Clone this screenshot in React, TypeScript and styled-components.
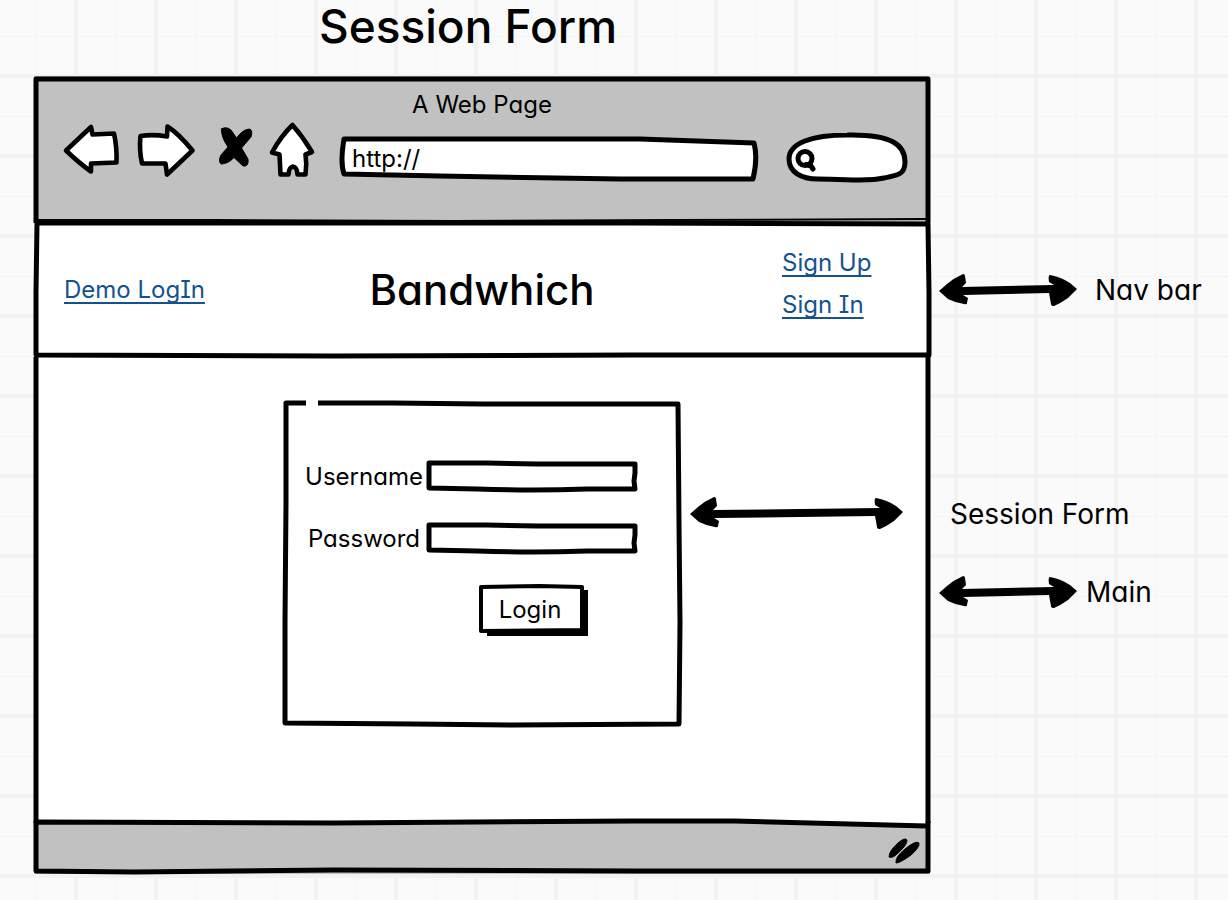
import React from "react";
import styled, { createGlobalStyle } from "styled-components";

const ink = "#000000";
const chromeGrey = "#c1c1c1";
const linkBlue = "#14528f";

const GlobalStyle = createGlobalStyle`
  *, *::before, *::after { box-sizing: border-box; }
  body {
    margin: 0;
    background-color: #fafafa;
    background-image:
      linear-gradient(90deg, #f2f2f2 4px, transparent 4px),
      linear-gradient(#f2f2f2 4px, transparent 4px),
      linear-gradient(90deg, #f4f4f4 1px, transparent 1px),
      linear-gradient(#f4f4f4 1px, transparent 1px);
    background-size: 80px 80px;
    background-position: 74px 0, 0 74px, 36px 0, 0 36px;
    color: ${ink};
    font-family: Inter, "Open Sans", sans-serif;
    font-feature-settings: "cv11", "cv08";
    font-size: 24px;
    line-height: 32px;
  }
`;

const Page = styled.div`
  min-height: 100vh;
  padding-left: 34px;
`;

const Board = styled.div`
  display: grid;
  grid-template-columns: minmax(0, 1fr) 298px;
`;

const BoardTitle = styled.h1`
  margin: 0;
  padding: 0 28px 24px 0;
  font-size: 46px;
  line-height: 52px;
  font-weight: 500;
  text-align: center;
`;

const Panel = styled.div<{ $fill: string }>`
  position: relative;
  grid-column: 1;
  background: ${(p) => p.$fill};
`;

const Outline = styled.svg`
  position: absolute;
  inset: 0;
  width: 100%;
  height: 100%;
  overflow: visible;
  pointer-events: none;
`;

const Chrome = styled(Panel)`
  padding: 13px 23px 40px 30px;
`;

const WindowTitle = styled.div`
  padding: 0 7px 0 0;
  text-align: center;
`;

const Toolbar = styled.div`
  display: flex;
  align-items: flex-start;
  gap: 26px;
`;

const IconRow = styled.div`
  display: flex;
  gap: 16px;
`;

const IconButton = styled.button`
  display: block;
  padding: 0;
  border: 0;
  background: none;
  cursor: pointer;

  svg { display: block; overflow: visible; }
`;

const SketchField = styled.div<{ $width?: string }>`
  position: relative;
  display: flex;
  flex: ${(p) => (p.$width ? "none" : "1")};
  width: ${(p) => p.$width ?? "auto"};
  height: 48px;
  margin-top: 14px;
`;

const TextInput = styled.input`
  position: relative;
  width: 100%;
  min-width: 0;
  padding: 0 12px;
  border: 0;
  outline: 0;
  background: transparent;
  color: inherit;
  font: inherit;
  font-feature-settings: inherit;
`;

const SearchInput = styled(TextInput)`
  padding-left: 32px;
`;

const NavBar = styled(Panel)`
  z-index: 1;
  display: grid;
  grid-template-columns: 1fr auto 1fr;
  align-items: center;
  min-height: 134px;
  padding: 0 30px;
`;

const NavLink = styled.a`
  color: ${linkBlue};
  text-decoration: underline;
  text-decoration-thickness: 2px;
  text-decoration-skip-ink: none;
  text-underline-offset: 4px;
`;

const Brand = styled.div`
  font-size: 42px;
  line-height: 52px;
  font-weight: 500;
`;

const AccountLinks = styled.nav`
  display: flex;
  flex-direction: column;
  align-items: flex-start;
  justify-self: end;
  width: 118px;
  gap: 10px;
  padding-bottom: 12px;
`;

const MainArea = styled(Panel)`
  display: grid;
  grid-template-columns: 1fr 398px 1fr;
  align-items: start;
  min-height: 466px;
  padding: 46px 0 94px;
`;

const LoginForm = styled.form`
  position: relative;
  grid-column: 2;
  display: flex;
  flex-direction: column;
  gap: 30px;
  min-height: 326px;
  padding: 58px 44px 0 18px;
`;

const FieldRow = styled.div`
  display: grid;
  grid-template-columns: 126px minmax(0, 1fr);
  align-items: center;
`;

const FieldLabel = styled.label`
  text-align: center;
`;

const FieldBox = styled.div`
  position: relative;
  display: flex;
  height: 32px;
`;

const SubmitButton = styled.button`
  position: relative;
  align-self: flex-end;
  width: 110px;
  height: 52px;
  margin-right: 48px;
  padding: 0 8px 2px 0;
  border: 0;
  background: none;
  color: inherit;
  font: inherit;
  font-feature-settings: inherit;
  cursor: pointer;

  span { position: relative; }
`;

const FormArrow = styled.div`
  padding: 94px 0 0 9px;
`;

const StatusBar = styled(Panel)`
  display: flex;
  align-items: center;
  justify-content: flex-end;
  height: 51px;
  padding: 4px 10px 0 0;
`;

const ResizeGrip = styled.svg`
  position: relative;
  display: block;
`;

const Notes = styled.div<{ $top: number }>`
  grid-column: 2;
  display: flex;
  flex-direction: column;
  gap: 40px;
  padding-top: ${(p) => p.$top}px;
`;

const Note = styled.div<{ $indent: number; $gap: number }>`
  display: flex;
  align-items: center;
  gap: ${(p) => p.$gap}px;
  padding-left: ${(p) => p.$indent}px;
  font-size: 28px;
  line-height: 38px;
  white-space: nowrap;
`;

const ArrowSvg = styled.svg`
  display: block;
  flex: none;
`;

type SketchProps = {
  box: string;
  d: string;
  stroke?: number;
  fill?: string;
  under?: React.ReactNode;
  over?: React.ReactNode;
};

function Sketch({ box, d, stroke = 5, fill = "none", under, over }: SketchProps) {
  return (
    <Outline viewBox={box} preserveAspectRatio="none" aria-hidden="true">
      {under}
      <path
        d={d}
        fill={fill}
        stroke={stroke ? ink : "none"}
        strokeWidth={stroke}
        strokeLinejoin="round"
        strokeLinecap="butt"
        vectorEffect="non-scaling-stroke"
      />
      {over}
    </Outline>
  );
}

function DoubleArrow({ width: w }: { width: number }) {
  const d =
    `M0 17 L8 10 Q15 4 24 0 Q26 0 26 2 L27 9 L23 13 L${w - 23} 11 L${w - 28} 8 ` +
    `Q${w - 29} 1 ${w - 27} 1 Q${w - 16} 3 ${w - 7} 9 L${w} 15 L${w - 9} 24 Q${w - 16} 29 ${w - 23} 32 ` +
    `Q${w - 26} 32 ${w - 26} 30 L${w - 28} 19 L24 21 L29 24 L28 29 Q28 31 25 30 Q17 29 9 25 Z`;
  return (
    <ArrowSvg width={w} height={32} aria-hidden="true">
      <path d={d} fill={ink} />
    </ArrowSvg>
  );
}

function ToolIcon({ label, x, width, children }: { label: string; x: number; width: number; children: React.ReactNode }) {
  return (
    <IconButton type="button" aria-label={label}>
      <svg
        width={width}
        height={60}
        viewBox={`${x} 121 ${width} 60`}
        fill="#fff"
        stroke={ink}
        strokeWidth="4.6"
        strokeLinejoin="round"
        strokeLinecap="round"
      >
        {children}
      </svg>
    </IconButton>
  );
}

function Field({ id, label, type }: { id: string; label: string; type: string }) {
  return (
    <FieldRow>
      <FieldLabel htmlFor={id}>{label}</FieldLabel>
      <FieldBox>
        <Sketch
          box="0 0 210 32"
          d="M2 2 L60 2 L110 3 L160 3 L208 3 L208 12 L207 20 L208 28 L160 28 Q105 30 50 28 L2 27 L2 18 L2 10 Z"
          fill="#fff"
        />
        <TextInput id={id} type={type} />
      </FieldBox>
    </FieldRow>
  );
}

export default function App() {
  return (
    <Page>
      <GlobalStyle />
      <Board>
        <BoardTitle>Session Form</BoardTitle>

        <Chrome $fill={chromeGrey}>
          <Sketch box="0 0 896 147" d="M2 147 L2 60 L2 3 L300 3 L894 3 L894 60 L894 147" />
          <Sketch box="0 0 896 147" d="M3 144 L180 144 L420 145 L640 144 L892 143" stroke={2} />
          <WindowTitle>A Web Page</WindowTitle>
          <Toolbar>
            <IconRow>
              <ToolIcon label="Back" x={64} width={56}>
                <path d="M66 150.5 L91 127 L92.5 134.5 L114 133.5 Q117 147 116.5 162.5 L91 163.5 L91 171.5 Q79 163 66 150.5 Z" />
              </ToolIcon>
              <ToolIcon label="Forward" x={136} width={60}>
                <path d="M140.5 136 Q153 134 167 136.5 L167.5 126.5 Q179 134 192.5 150.5 L167 174.5 L165.5 163.5 L142 163.5 Q139 150 140.5 136 Z" />
              </ToolIcon>
              <ToolIcon label="Stop" x={212} width={42}>
                <path
                  d="M221.500 129 Q226 126 231 130 L236.500 138 Q243 129 250 129 Q253 131 251 137 L241.500 148 L248 159 Q249 167 243 166 L234 157.500 Q228 164 221 164 Q218 161 221 155 L228 147 Q221 137 221.500 129 Z"
                  fill={ink}
                  stroke={ink}
                  strokeWidth="1"
                />
              </ToolIcon>
              <ToolIcon label="Home" x={270} width={44}>
                <path d="M292.5 125 Q303 137 312 152 L305.5 154.5 Q307 164 305.5 174.5 L297.5 174.5 Q297 167 293 166.5 Q289 167 288.5 174.5 L280.5 174.5 L279.5 154.5 L272 152.5 Q281 136 292.5 125 Z" />
              </ToolIcon>
            </IconRow>
            <SketchField>
              <Sketch
                box="340 135 419 48"
                d="M344 139 L640 139 L754 143 Q758 158 753 179 L620 179 L440 176 L344 174 Q340 162 344 139 Z"
                fill="#fff"
              />
              <TextInput aria-label="Address" defaultValue="http://" />
            </SketchField>
            <SketchField $width="122px">
              <Sketch
                box="785 135 122 48"
                d="M789 159 C789 143 812 135 847 135 C892 134 905 145 905 162 C905 174 899 175 884 178 C867 182 850 179 818 179 C801 179 789 172 789 159 Z"
                fill="#fff"
                over={
                  <g fill="none" stroke={ink} strokeWidth="5" strokeLinecap="round">
                    <circle cx="805" cy="158.5" r="7" />
                    <path d="M806 164.5 L811 166 L813 169" />
                  </g>
                }
              />
              <SearchInput type="search" aria-label="Search" />
            </SketchField>
          </Toolbar>
        </Chrome>

        <NavBar $fill="#ffffff">
          <Sketch
            box="0 0 896 134"
            d="M3 0 L120 0 L300 0 L600 0 L894 1 L895 70 L895 132 L600 132 L300 133 L2 132 L2 70 Z"
          />
          <div>
            <NavLink href="#demo">Demo LogIn</NavLink>
          </div>
          <Brand>Bandwhich</Brand>
          <AccountLinks aria-label="Account">
            <NavLink href="#sign-up">Sign Up</NavLink>
            <NavLink href="#sign-in">Sign In</NavLink>
          </AccountLinks>
        </NavBar>
        <Notes $top={48}>
          <Note $indent={9} $gap={18}>
            <DoubleArrow width={138} />
            Nav bar
          </Note>
        </Notes>

        <MainArea $fill="#ffffff">
          <Sketch box="0 0 896 466" d="M2 0 L2 466 M894 0 L894 466" />
          <LoginForm onSubmit={(e) => e.preventDefault()}>
            <Sketch
              box="0 0 398 326"
              d="M35 0 L110 0 L200 1 L395 1 L396 120 L397 220 L396 321 L230 322 L130 321 L2 320 L2 220 L3 100 L3 0 L23 0"
            />
            <Field id="username" label="Username" type="text" />
            <Field id="password" label="Password" type="password" />
            <SubmitButton type="submit">
              <Sketch
                box="0 0 110 52"
                d="M2 2 L60 1 L103 2 L103 45 L2 46 Z"
                fill="#fff"
                stroke={4}
                under={<path d="M8 5 H109 V51 H8 Z" fill={ink} />}
              />
              <span>Login</span>
            </SubmitButton>
          </LoginForm>
          <FormArrow>
            <DoubleArrow width={213} />
          </FormArrow>
        </MainArea>
        <Notes $top={138}>
          <Note $indent={20} $gap={0}>
            Session Form
          </Note>
          <Note $indent={9} $gap={9}>
            <DoubleArrow width={138} />
            Main
          </Note>
        </Notes>

        <StatusBar $fill={chromeGrey}>
          <Sketch box="0 0 896 51" d="M2 -1 L893 -1 L893 3 L700 -1 Z" fill="#fff" stroke={0} />
          <Sketch
            box="0 0 896 51"
            d="M3 -1 L300 0 L600 -2 L700 -2 L893 3 M2 -2 L2 48 L100 49 L300 47 L600 48 L894 48 L894 -2"
          />
          <ResizeGrip
            width="32"
            height="26"
            viewBox="888 838 32 26"
            fill={ink}
            stroke={ink}
            strokeWidth="1"
            aria-hidden="true"
          >
            <path d="M889 857 Q889 851 898 843 Q905 837 907 840 Q907 845 900 851 Q893 859 889 857 Z" />
            <path d="M896 863 Q895 857 905 849 Q916 840 919 843 Q920 847 911 855 Q900 863 896 863 Z" />
          </ResizeGrip>
        </StatusBar>
      </Board>
    </Page>
  );
}
